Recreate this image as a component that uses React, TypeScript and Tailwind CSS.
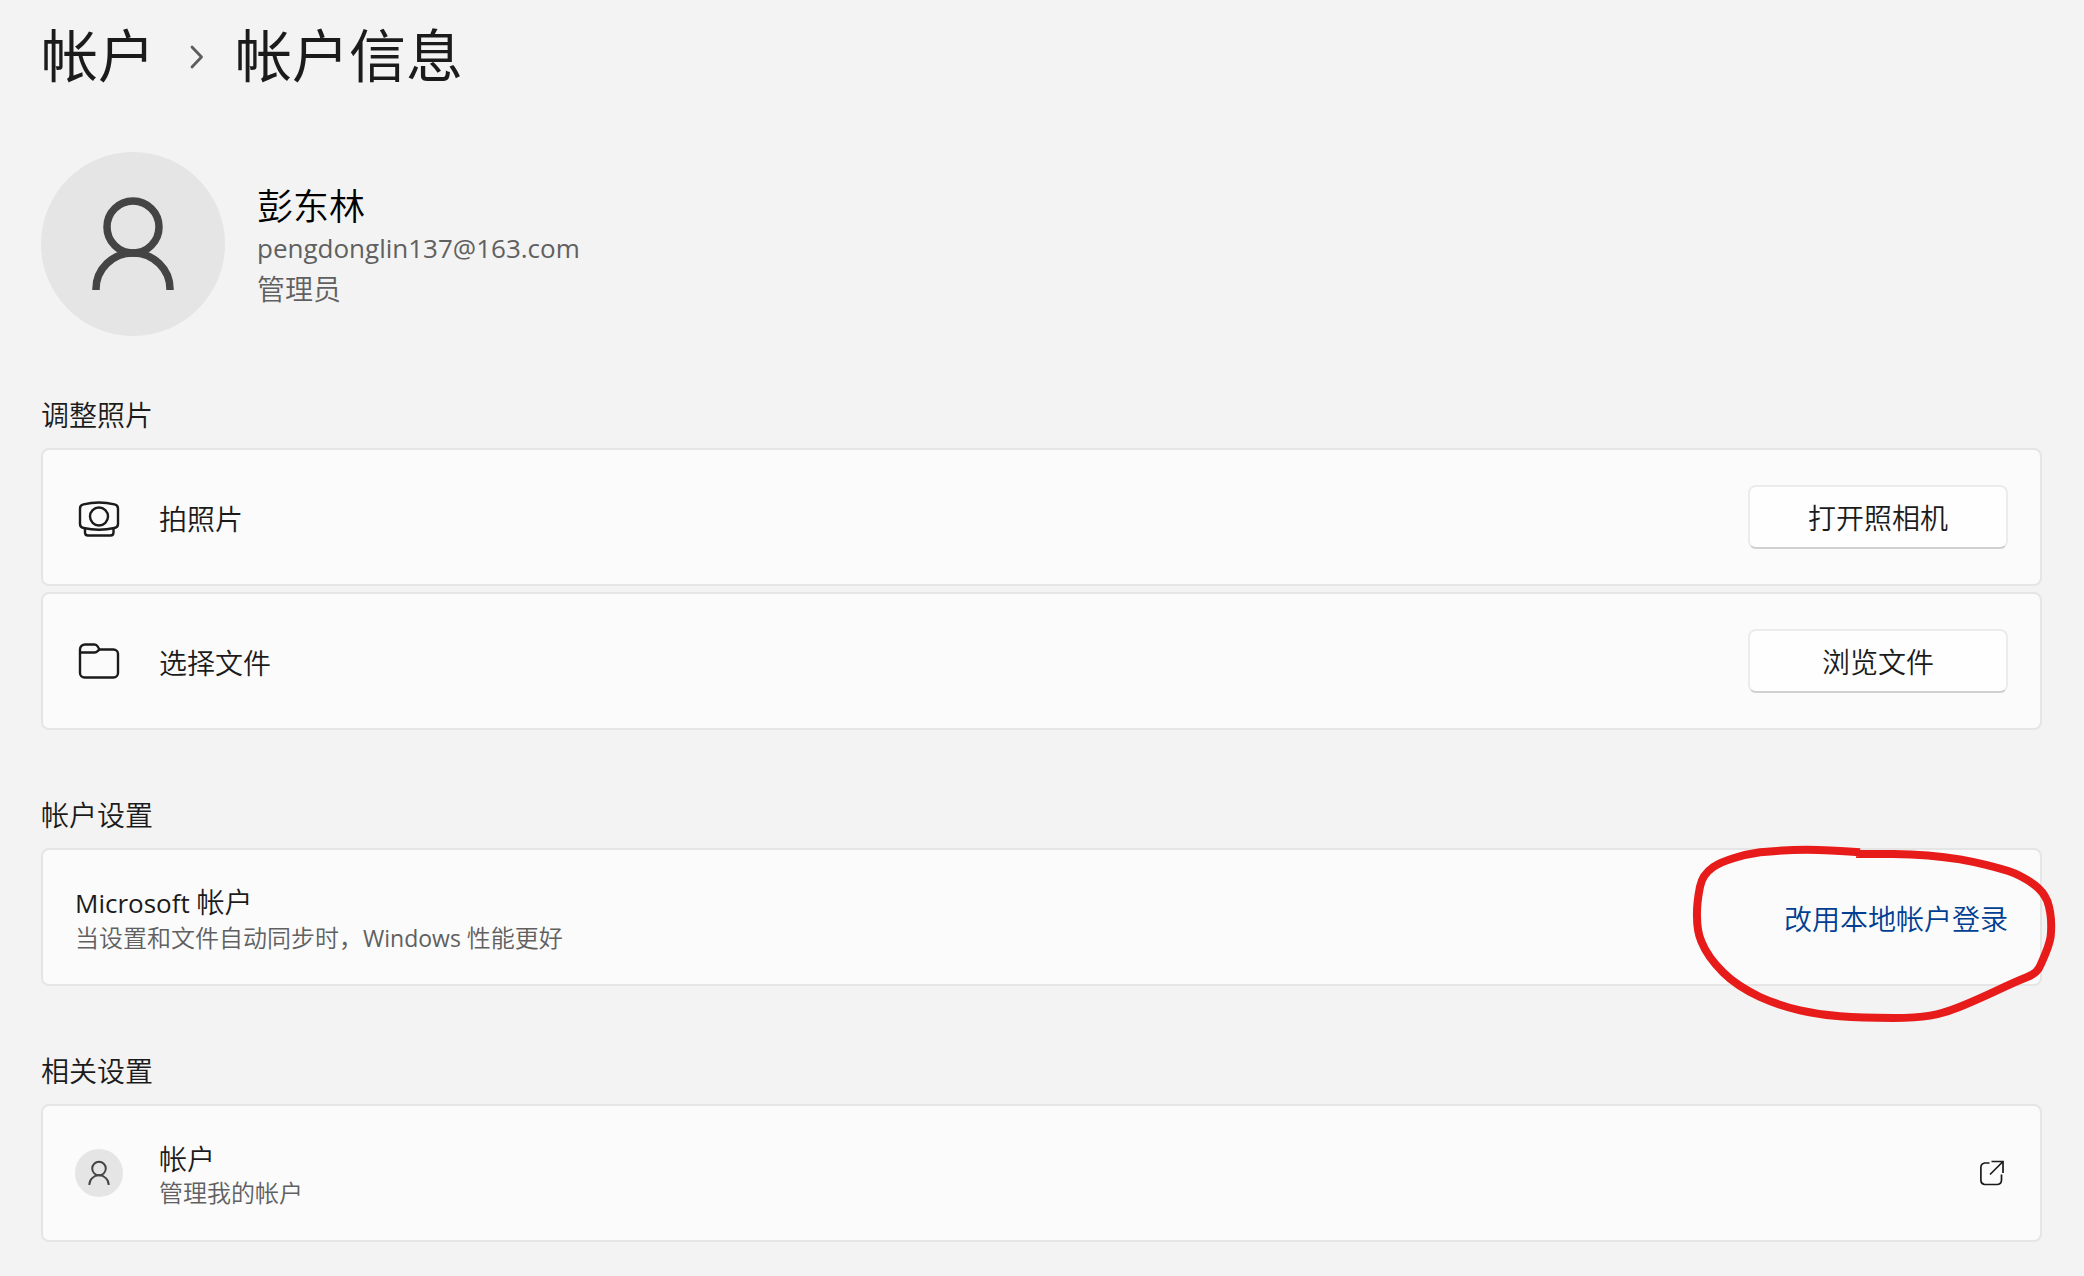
import type { ReactNode } from "react";

function PersonAvatar({ className }: { className: string }) {
  return (
    <svg viewBox="0 0 184 184" className={className} fill="none" aria-hidden="true">
      <circle cx="92" cy="92" r="92" fill="#e5e5e5" />
      <g stroke="#444444" strokeWidth="7.5">
        <circle cx="92" cy="75" r="26" />
        <path d="M55 138v-1a37 36 0 0 1 74 0v1" />
      </g>
    </svg>
  );
}

function ChevronIcon() {
  return (
    <svg viewBox="0 0 24 40" className="h-10 w-6" fill="none" stroke="#5c5c5c" strokeWidth="2.800" strokeLinecap="round" strokeLinejoin="round" aria-hidden="true">
      <path d="M9 15l9.500 10-9.500 10" />
    </svg>
  );
}

function WebcamIcon() {
  return (
    <svg viewBox="0 0 48 48" className="size-12" fill="none" stroke="#1b1b1b" strokeWidth="2.400" aria-hidden="true">
      <path d="M8.500 11.400Q24 7.600 39.500 11.400Q43 12.200 43 15.500V31Q43 34.300 39.500 35Q24 38.400 8.500 35Q5 34.300 5 31V15.500Q5 12.200 8.500 11.400Z" />
      <circle cx="24" cy="23.500" r="9" />
      <path d="M10 35.500V39.500Q10 42.500 13 42.500H35.500Q38.500 42.500 38.500 39.500V35.500" />
    </svg>
  );
}

function FolderIcon() {
  return (
    <svg viewBox="0 0 48 48" className="size-12" fill="none" stroke="#1b1b1b" strokeWidth="2.400" strokeLinejoin="round" aria-hidden="true">
      <path d="M5 12.500a5 5 0 0 1 5-5H19.500Q21.500 7.500 22.700 9.500L24.500 12.500H38.500a4.500 4.500 0 0 1 4.500 4.500V36a4.500 4.500 0 0 1-4.500 4.500H9.500A4.500 4.500 0 0 1 5 36Z" />
      <path d="M5 15.500H19.500Q21.500 15.500 22.700 14L24.500 12.500" />
    </svg>
  );
}

function OpenExternalIcon() {
  return (
    <svg viewBox="0 0 28 28" className="size-7" fill="none" stroke="#1b1b1b" strokeWidth="1.700" aria-hidden="true">
      <path d="M9.500 4H4.500A4.500 4.500 0 0 0 0.900 8.500V21A4.500 4.500 0 0 0 4.500 25.500H17.500A4.500 4.500 0 0 0 21.500 21V15.500" />
      <path d="M11.500 2.500H23V14M23 2.500L10 15.500" />
    </svg>
  );
}

function MarkerCircle() {
  return (
    <svg
      viewBox="90 66 1110 552"
      className="pointer-events-none absolute -top-2 -right-5 h-[184px] w-[370px]"
      fill="none"
      stroke="#e81b1b"
      strokeWidth="24"
      strokeLinejoin="round"
      aria-hidden="true"
    >
      <path d="M600 97C540 92 490 89 440 89C380 89 330 94 300 97C250 104 190 121 160 141C138 156 125 174 120 200C113 235 110 260 111 290C111 325 118 350 124 364C138 400 165 433 190 458C220 488 260 512 300 531C340 549 380 562 420 571C455 579 500 586 540 589C590 593 650 594 700 594C750 594 780 592 810 587C840 582 870 572 900 560C970 533 1030 500 1100 472C1125 462 1135 452 1143 432C1155 405 1168 378 1172 350C1176 310 1173 275 1162 243C1152 220 1140 207 1124 195C1100 177 1075 163 1045 153C1000 139 950 127 900 118C830 107 770 103 700 102H588" />
    </svg>
  );
}

function Section({ title, children }: { title: string; children: ReactNode }) {
  return (
    <section>
      <h2 className="mb-3.5 text-[28px] leading-10">{title}</h2>
      <div className="flex flex-col gap-1.5">{children}</div>
    </section>
  );
}

function Card({ children }: { children: ReactNode }) {
  return (
    <div className="relative flex min-h-[138px] items-center gap-9 rounded-lg border-2 border-[#e5e5e5] bg-[#fbfbfb] px-8">
      {children}
    </div>
  );
}

function ActionButton({ children }: { children: ReactNode }) {
  return (
    <button
      type="button"
      className="ml-auto h-16 w-[260px] rounded-lg border-2 border-[#ececec] border-b-[#d0d0d0] bg-[#fefefe] text-[28px] leading-10"
    >
      {children}
    </button>
  );
}

export default function App() {
  return (
    <main
      lang="zh-CN"
      className="min-h-screen bg-[#f3f3f3] pr-[42px] pb-8 pl-[41px] font-['Noto_Sans_CJK_SC',sans-serif] font-[350] text-[#1b1b1b]"
    >
      <nav aria-label="导航路径" className="flex items-center gap-7 pt-3 text-[57px] leading-20 font-normal">
        <a href="#accounts">帐户</a>
        <ChevronIcon />
        <h1>帐户信息</h1>
      </nav>

      <header className="mt-15 mb-[58px] flex items-center gap-8">
        <PersonAvatar className="size-[184px]" />
        <div className="text-[28px] leading-10 text-[#606060]">
          <p className="text-4xl leading-12 text-black">彭东林</p>
          <p className="font-['Open_Sans',sans-serif] text-[26px] font-normal">pengdonglin137@163.com</p>
          <p>管理员</p>
        </div>
      </header>

      <div className="flex flex-col gap-16">
        <Section title="调整照片">
          <Card>
            <WebcamIcon />
            <p className="pt-0.5 text-[28px] leading-10">拍照片</p>
            <ActionButton>打开照相机</ActionButton>
          </Card>
          <Card>
            <FolderIcon />
            <p className="pt-0.5 text-[28px] leading-10">选择文件</p>
            <ActionButton>浏览文件</ActionButton>
          </Card>
        </Section>

        <Section title="帐户设置">
          <Card>
            <div className="pt-0.5">
              <h3 className="text-[28px] leading-9">
                <span className="font-['Open_Sans',sans-serif] text-[26px] font-normal">Microsoft </span>帐户
              </h3>
              <p className="text-2xl leading-8 text-[#606060]">
                当设置和文件自动同步时，<span className="font-['Open_Sans',sans-serif] text-[23px] font-normal">Windows </span>性能更好
              </p>
            </div>
            <a href="#local-account" className="ml-auto pt-0.5 text-[28px] leading-10 text-[#003e92]">
              改用本地帐户登录
            </a>
            <MarkerCircle />
          </Card>
        </Section>

        <Section title="相关设置">
          <Card>
            <PersonAvatar className="size-12" />
            <div className="pt-0.5">
              <h3 className="text-[28px] leading-9">帐户</h3>
              <p className="text-2xl leading-8 text-[#606060]">管理我的帐户</p>
            </div>
            <a href="#manage-account" aria-label="管理我的帐户" className="ml-auto">
              <OpenExternalIcon />
            </a>
          </Card>
        </Section>
      </div>
    </main>
  );
}
